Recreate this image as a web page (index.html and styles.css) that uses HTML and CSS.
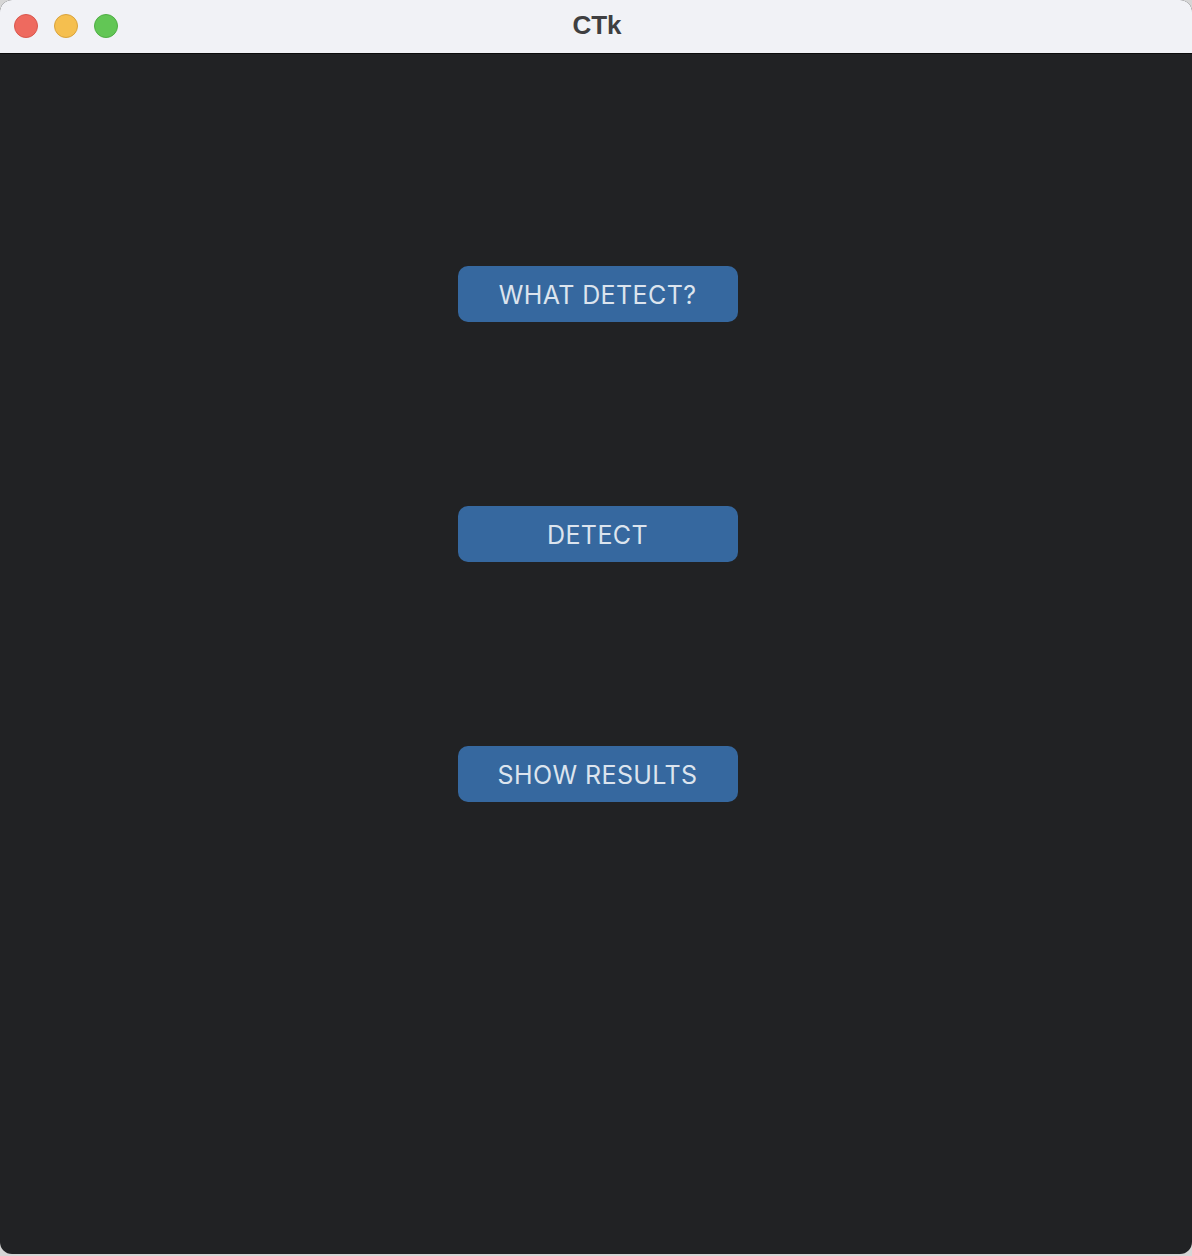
FILE: index.html
```html
<!DOCTYPE html>
<html>
<head>
<meta charset="utf-8">
<title>CTk</title>
<link rel="stylesheet" href="styles.css">
</head>
<body>
<div class="window">
  <div class="titlebar">
    <div class="lights">
      <span class="light red"></span>
      <span class="light yellow"></span>
      <span class="light green"></span>
    </div>
    <div class="title">CTk</div>
  </div>
  <div class="content">
    <button class="btn">WHAT DETECT?</button>
    <button class="btn">DETECT</button>
    <button class="btn">SHOW RESULTS</button>
  </div>
</div>
</body>
</html>
```
FILE: styles.css
```css
html, body {
  margin: 0;
  padding: 0;
  background: #d6d6d6;
}
body {
  width: 1192px;
  height: 1256px;
  overflow: hidden;
}
.window {
  width: 1192px;
  height: 1254px;
  border-radius: 12px;
  overflow: hidden;
  background: #212224;
  display: flex;
  flex-direction: column;
}
.titlebar {
  height: 53px;
  flex: 0 0 53px;
  background: #f1f2f6;
  border-bottom: 1px solid #0c0c0c;
  position: relative;
  display: flex;
  align-items: center;
  justify-content: center;
}
.lights {
  position: absolute;
  left: 14px;
  top: 14px;
  display: flex;
  gap: 16px;
}
.light {
  width: 24px;
  height: 24px;
  border-radius: 50%;
  box-sizing: border-box;
  display: block;
}
.red { background: #ee6a5f; border: 1px solid #d9574d; }
.yellow { background: #f5bf4f; border: 1px solid #d9a33c; }
.green { background: #62c655; border: 1px solid #4fae44; }
.title {
  font-family: "Liberation Sans", Arial, sans-serif;
  font-weight: bold;
  font-size: 26px;
  color: #3f3f41;
  margin-top: -2px;
  margin-left: 2px;
}
.content {
  flex: 1;
  display: flex;
  flex-direction: column;
  align-items: center;
  padding-top: 212px;
  gap: 184px;
}
.btn {
  width: 280px;
  height: 56px;
  margin-left: 4px;
  border: none;
  border-radius: 10px;
  background: #36689f;
  color: #dce4ee;
  font-family: Inter, "Liberation Sans", Arial, sans-serif;
  font-size: 25px;
  letter-spacing: 0.4px;
  padding: 2px 1px 0 0;
}
```
